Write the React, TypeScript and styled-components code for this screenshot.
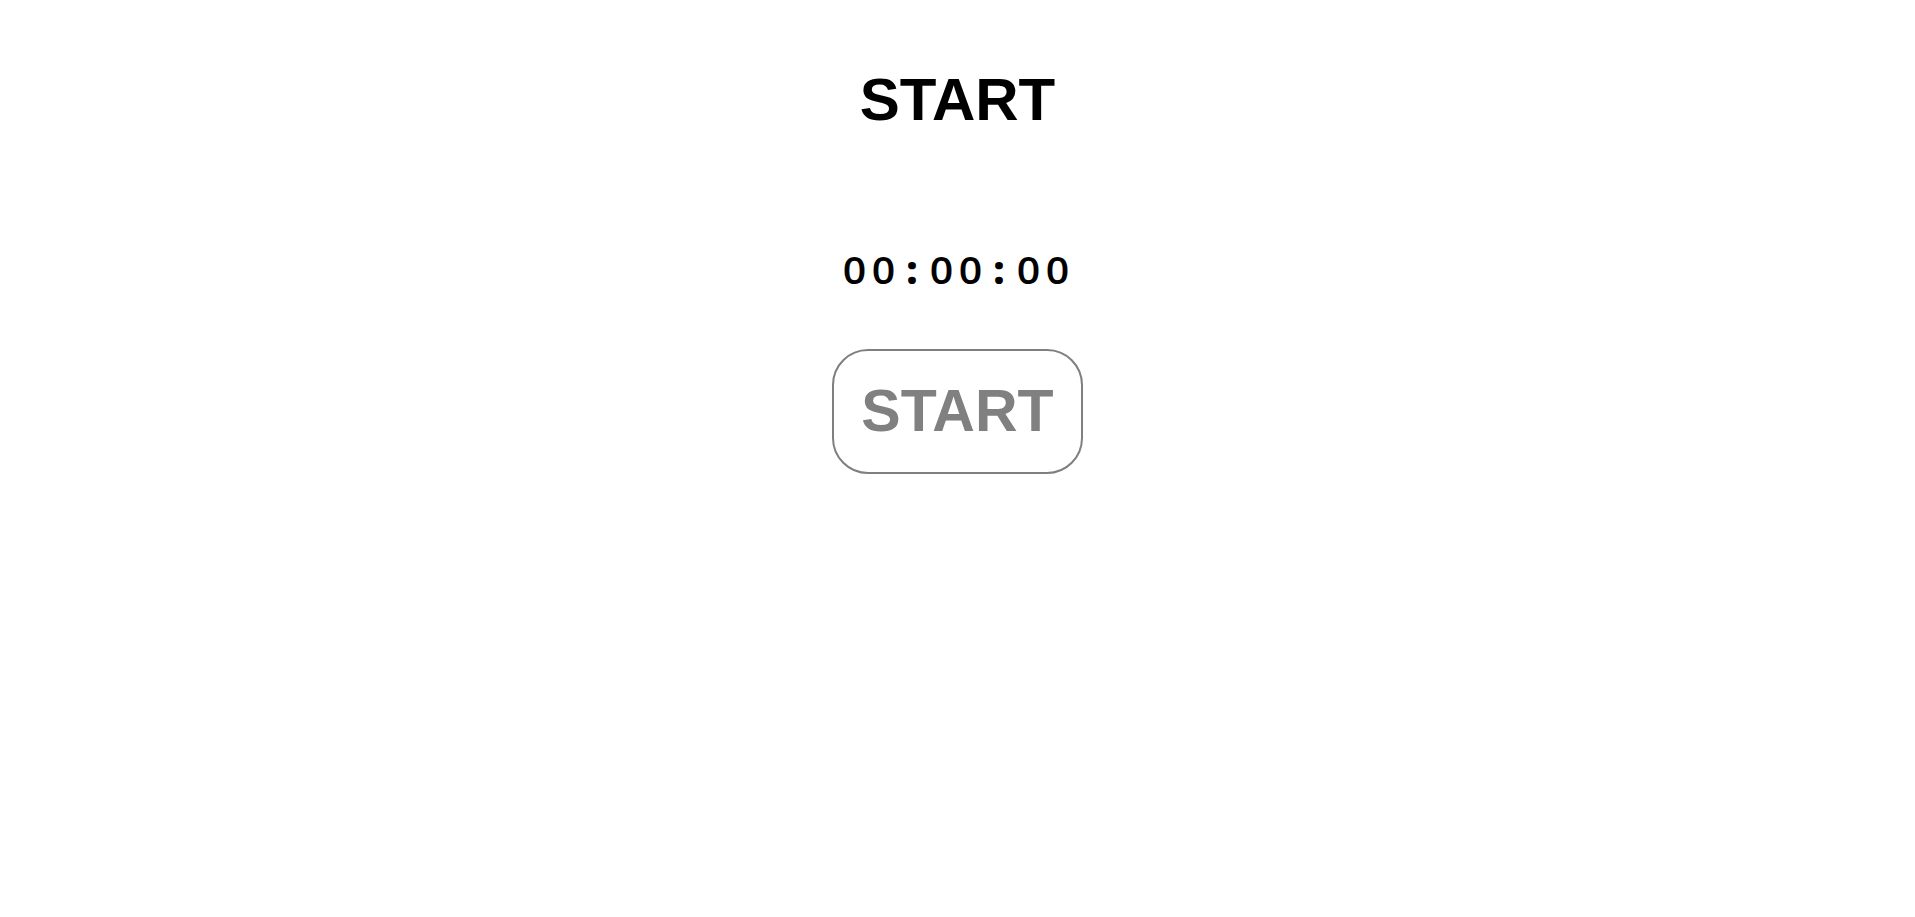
import React from "react";
import styled, { createGlobalStyle } from "styled-components";

const GlobalStyle = createGlobalStyle`
  html, body {
    margin: 0;
    padding: 0;
    background: #ffffff;
  }
  body {
    font-family: "Liberation Sans", Arial, sans-serif;
  }
`;

const Page = styled.main`
  display: flex;
  flex-direction: column;
  align-items: center;
  padding-top: 65px;
  min-height: 100vh;
  box-sizing: border-box;
`;

const Title = styled.h1`
  margin: 0 0 109px;
  font-family: "Liberation Sans", Arial, sans-serif;
  font-weight: 700;
  font-size: 60px;
  line-height: normal;
  color: #000000;
`;

const Timer = styled.div`
  display: flex;
  margin: 0 4px 54px 0;
  font-family: "Open Sans", "DejaVu Sans", sans-serif;
  font-size: 38px;
  font-weight: 600;
  line-height: normal;
  color: #000000;
`;

const Cell = styled.span<{ $sep?: boolean }>`
  display: inline-block;
  width: 29px;
  text-align: center;
  font-weight: ${(p) => (p.$sep ? 800 : 600)};
  transform: ${(p) => (p.$sep ? "none" : "scaleX(1.08)")};
`;

const StartButton = styled.button`
  box-sizing: border-box;
  width: 251px;
  height: 125px;
  padding: 0;
  border: 2.5px solid #7f7f7f;
  border-radius: 36px;
  background: #ffffff;
  color: #808080;
  font-family: "Liberation Sans", Arial, sans-serif;
  font-weight: 700;
  font-size: 59px;
  line-height: 1;
  cursor: pointer;
  display: flex;
  align-items: center;
  justify-content: center;
`;

export default function App() {
  const time = "00:00:00";
  return (
    <>
      <GlobalStyle />
      <Page>
        <Title>START</Title>
        <Timer>
          {time.split("").map((ch, i) => (
            <Cell key={i} $sep={ch === ":"}>
              {ch}
            </Cell>
          ))}
        </Timer>
        <StartButton>START</StartButton>
      </Page>
    </>
  );
}
